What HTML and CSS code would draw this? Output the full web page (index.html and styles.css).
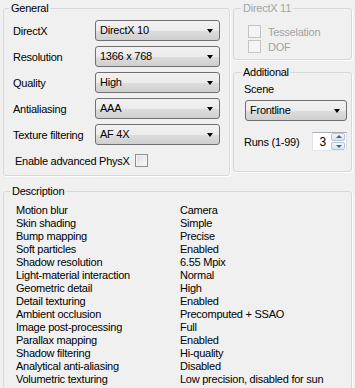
FILE: index.html
```html
<!DOCTYPE html>
<html lang="en">
<head>
    <meta charset="UTF-8">
    <title>Benchmark settings</title>
    <link rel="stylesheet" href="styles.css">
</head>
<body>
    <div class="window">
        <div class="top">
            <fieldset class="group general">
                <legend>General</legend>
                <div class="row"><span class="label">DirectX</span><div class="combo">DirectX 10</div></div>
                <div class="row"><span class="label">Resolution</span><div class="combo">1366 x 768</div></div>
                <div class="row"><span class="label">Quality</span><div class="combo">High</div></div>
                <div class="row"><span class="label">Antialiasing</span><div class="combo">AAA</div></div>
                <div class="row"><span class="label">Texture filtering</span><div class="combo">AF 4X</div></div>
                <div class="row physx"><span>Enable advanced PhysX</span><span class="check"></span></div>
            </fieldset>
            <div class="side">
                <fieldset class="group dx11">
                    <legend>DirectX 11</legend>
                    <div class="opt"><span class="check"></span>Tesselation</div>
                    <div class="opt"><span class="check"></span>DOF</div>
                </fieldset>
                <fieldset class="group additional">
                    <legend>Additional</legend>
                    <div class="caption">Scene</div>
                    <div class="combo scene">Frontline</div>
                    <div class="runs">
                        <span>Runs (1-99)</span>
                        <div class="spin">
                            <span class="value">3</span>
                            <span class="buttons"><span class="up"></span><span class="down"></span></span>
                        </div>
                    </div>
                </fieldset>
            </div>
        </div>
        <fieldset class="group description">
            <legend>Description</legend>
            <div class="specs">
                <span>Motion blur</span><span>Camera</span>
                <span>Skin shading</span><span>Simple</span>
                <span>Bump mapping</span><span>Precise</span>
                <span>Soft particles</span><span>Enabled</span>
                <span>Shadow resolution</span><span>6.55 Mpix</span>
                <span>Light-material interaction</span><span>Normal</span>
                <span>Geometric detail</span><span>High</span>
                <span>Detail texturing</span><span>Enabled</span>
                <span>Ambient occlusion</span><span>Precomputed + SSAO</span>
                <span>Image post-processing</span><span>Full</span>
                <span>Parallax mapping</span><span>Enabled</span>
                <span>Shadow filtering</span><span>Hi-quality</span>
                <span>Analytical anti-aliasing</span><span>Disabled</span>
                <span>Volumetric texturing</span><span>Low precision, disabled for sun</span>
            </div>
        </fieldset>
    </div>
</body>
</html>
```

FILE: styles.css
```css
body {
    margin: 0;
    background: #f0f0f0;
    font-family: "Liberation Sans", Arial, sans-serif;
    font-size: 11px;
    letter-spacing: -0.25px;
    color: #000;
    overflow: hidden;
}
.window {
    padding: 2px 3px 0 3px;
}
.top {
    display: flex;
    gap: 3px;
}
.group {
    margin: 0;
    min-width: 0;
    box-sizing: border-box;
    border: 1px solid #d5d9dc;
    border-radius: 3px;
    box-shadow: 1px 1px 0 #fff;
}
.group legend {
    padding: 0 2px;
    line-height: 13px;
    height: 13px;
}
.general {
    width: 227px;
    padding: 5px 9px 4px 9px;
    display: flex;
    flex-direction: column;
    gap: 5px;
}
.general legend {
    margin-left: -4px;
}
.row {
    display: flex;
    align-items: center;
    height: 21px;
}
.row .label {
    width: 82px;
}
.combo {
    position: relative;
    flex: 1;
    height: 21px;
    box-sizing: border-box;
    border: 1px solid #707070;
    border-radius: 3px;
    padding-left: 4px;
    line-height: 19px;
    background: linear-gradient(#f2f2f2, #ebebeb 50%, #dddddd 51%, #cfcfcf);
}
.combo::after {
    content: "";
    position: absolute;
    right: 6px;
    top: 8px;
    border-left: 3.5px solid transparent;
    border-right: 3.5px solid transparent;
    border-top: 4px solid #000;
}
.physx {
    padding-left: 2px;
    gap: 5px;
}
.check {
    display: inline-block;
    width: 13px;
    height: 13px;
    box-sizing: border-box;
    border: 1px solid #8e8f8f;
    background: linear-gradient(135deg, #dcdcdc, #fbfbfb);
    box-shadow: inset 0 0 0 1px #f4f4f4;
}
.side {
    width: 119px;
    display: flex;
    flex-direction: column;
    gap: 6px;
}
.dx11 {
    padding: 10px 4px 6px 14px;
    color: #a3a3a3;
    display: flex;
    flex-direction: column;
    gap: 2px;
}
.dx11 legend {
    margin-left: -7px;
}
.opt {
    display: flex;
    align-items: center;
    gap: 7px;
    height: 13px;
}
.dx11 .check {
    border-color: #c4c4c4;
    background: #f4f4f4;
    box-shadow: none;
}
.additional {
    padding: 4px 4px 20px 10px;
}
.additional legend {
    margin-left: -3px;
}
.caption {
    height: 12px;
    line-height: 12px;
}
.scene {
    margin: 5px 0 0 1px;
}
.runs {
    display: flex;
    align-items: center;
    justify-content: space-between;
    margin-top: 11px;
}
.spin {
    display: flex;
    align-items: center;
    width: 35px;
    height: 19px;
    box-sizing: border-box;
    border: 1px solid #abadb3;
    border-color: #abadb3 #dbdfe6 #e3e9ef #e2e3ea;
    background: #fff;
}
.spin .value {
    flex: 1;
    text-align: right;
    padding-right: 5px;
    font-size: 12px;
}
.buttons {
    display: flex;
    flex-direction: column;
    gap: 1px;
    width: 14px;
    margin-right: 1px;
}
.buttons span {
    position: relative;
    height: 7px;
    border: 1px solid #b6c6d6;
    border-radius: 2px;
    box-sizing: content-box;
    height: 6px;
    background: linear-gradient(#f2f6fa, #d8e4ef);
}
.buttons span::after {
    content: "";
    position: absolute;
    left: 4px;
    border-left: 3px solid transparent;
    border-right: 3px solid transparent;
}
.buttons .up::after {
    top: 1px;
    border-bottom: 3px solid #4d6185;
}
.buttons .down::after {
    top: 2px;
    border-top: 3px solid #4d6185;
}
.description {
    margin-top: 9px;
    padding: 6px 4px 20px 12px;
}
.description legend {
    margin-left: -6px;
}
.specs {
    display: grid;
    grid-template-columns: 164px 1fr;
    line-height: 13px;
}
```
